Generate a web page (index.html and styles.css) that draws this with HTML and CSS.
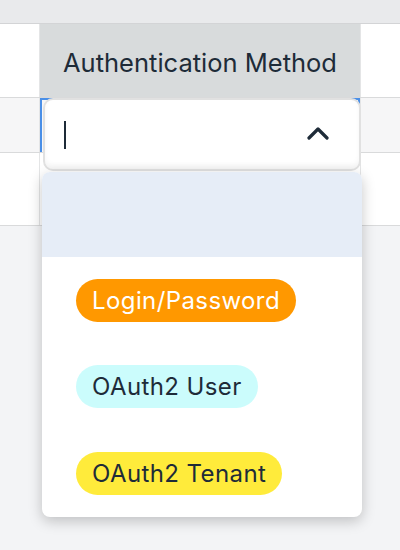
FILE: index.html
```html
<!DOCTYPE html>
<html lang="en">
<head>
    <meta charset="UTF-8">
    <meta name="viewport" content="width=device-width, initial-scale=1.0">
    <title>Authentication Method</title>
    <link rel="stylesheet" href="styles.css">
</head>
<body>

<div class="grid">
    <div class="topbar"></div>

    <!-- Cabecera -->
    <div class="row header">
        <div class="cell"></div>
        <div class="cell col">Authentication Method</div>
        <div class="cell"></div>
    </div>

    <!-- Fila en edición -->
    <div class="row striped">
        <div class="cell"></div>
        <div class="cell col editing"></div>
        <div class="cell"></div>
    </div>

    <div class="row tall">
        <div class="cell"></div>
        <div class="cell col"></div>
        <div class="cell"></div>
    </div>
</div>

<!-- Editor desplegado sobre la celda -->
<div class="editor">
    <span class="caret"></span>
    <svg class="chevron" width="22" height="14" viewBox="0 0 22 14">
        <path d="M2 12 L11 3 L20 12" fill="none" stroke="#1e2b38" stroke-width="3.2" stroke-linecap="round" stroke-linejoin="round"/>
    </svg>
</div>

<ul class="dropdown">
    <li class="option active"></li>
    <li class="option"><span class="pill orange">Login/Password</span></li>
    <li class="option"><span class="pill cyan">OAuth2 User</span></li>
    <li class="option"><span class="pill yellow">OAuth2 Tenant</span></li>
</ul>

</body>
</html>
```

FILE: styles.css
```css
body {
    font-family: Inter, "Noto Sans", sans-serif;
    background-color: #f3f4f6;
    color: #1e2b38;
    margin: 0;
    width: 400px;
    height: 550px;
    overflow: hidden;
}

.grid {
    background-color: #fff;
}

.topbar {
    height: 23px;
    background-color: #e9eaec;
    border-bottom: 1px solid #d3d4d6;
}

.row {
    display: grid;
    grid-template-columns: 40px 321px 1fr;
    border-bottom: 1px solid #d9dadb;
}

.cell {
    border-right: 1px solid #e4e5e6;
}

.cell:last-child {
    border-right: none;
}

.header {
    height: 73px;
}

.header .col {
    background-color: #d8dbdc;
    display: flex;
    align-items: center;
    justify-content: center;
    font-size: 25.5px;
    padding-top: 4px;
    box-sizing: border-box;
}

.striped {
    height: 54px;
    background-color: #f6f6f7;
}

.tall {
    height: 72px;
}

.editing {
    box-shadow: inset 2px 0 0 #4a8fe7, inset -2px 2px 0 #4a8fe7;
}

.editor {
    position: absolute;
    left: 43px;
    top: 98px;
    width: 318px;
    height: 73px;
    box-sizing: border-box;
    border: 2px solid #e1e1e1;
    border-radius: 10px;
    background-color: #fff;
    box-shadow: inset 0 -4px 5px rgba(0, 0, 0, 0.04);
    display: flex;
    align-items: center;
    justify-content: space-between;
    padding: 0 30px 0 19px;
}

.caret {
    width: 2px;
    height: 28px;
    background-color: #1e2b38;
}

.chevron {
    margin-top: -4px;
}

.dropdown {
    position: absolute;
    left: 42px;
    top: 172px;
    width: 320px;
    margin: 0;
    padding: 0;
    list-style: none;
    background-color: #fff;
    border-radius: 8px;
    overflow: hidden;
    box-shadow: 0 4px 14px rgba(0, 0, 0, 0.22);
}

.option {
    height: 86.5px;
    display: flex;
    align-items: center;
    padding-left: 34px;
}

.option.active {
    height: 85px;
    background-color: #e6edf7;
}

.pill {
    font-size: 24px;
    letter-spacing: 0.4px;
    line-height: 43px;
    height: 43px;
    padding: 0 16px;
    border-radius: 22px;
}

.orange {
    background-color: #ff9800;
    color: #fff;
}

.cyan {
    background-color: #cbfcfc;
}

.yellow {
    background-color: #ffeb3b;
}
```
